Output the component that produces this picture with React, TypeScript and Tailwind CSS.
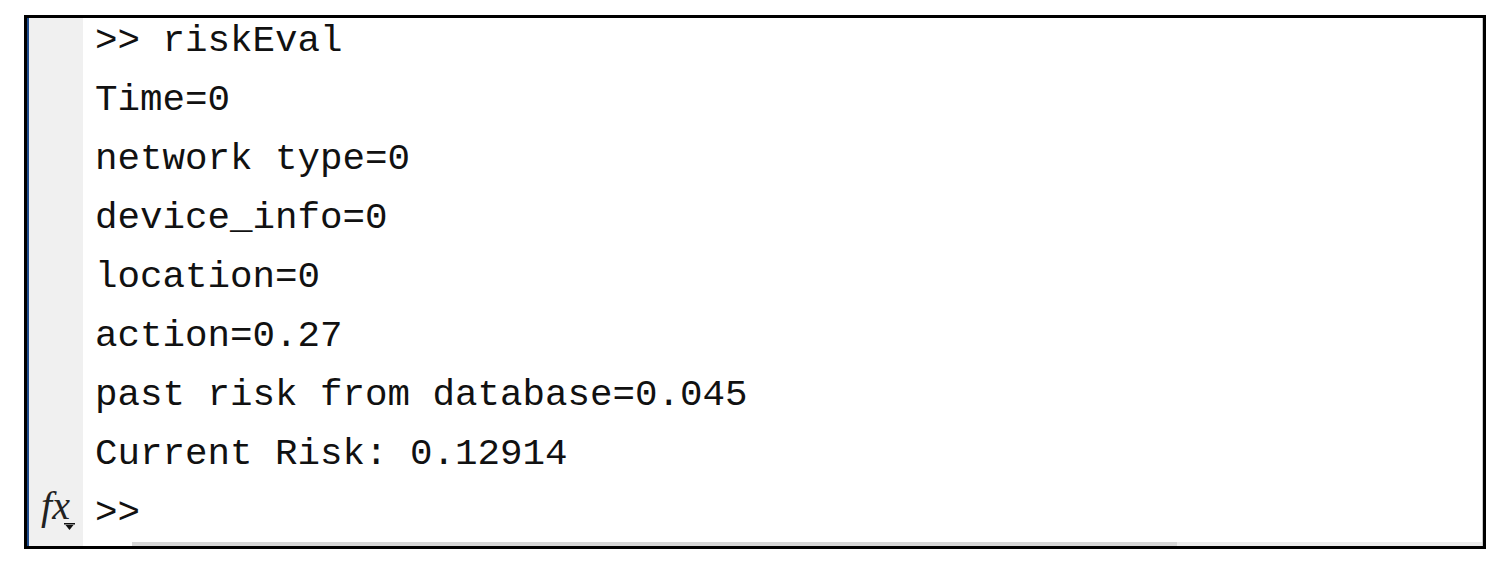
import React from "react";

const lines = [
  ">> riskEval",
  "Time=0",
  "network type=0",
  "device_info=0",
  "location=0",
  "action=0.27",
  "past risk from database=0.045",
  "Current Risk: 0.12914",
  ">>",
];

export default function App() {
  return (
    <div className="w-[1500px] h-[572px] bg-white pt-[15px] pl-[24px]">
      <div className="w-[1462px] h-[534px] border-[3px] border-black flex bg-white">
        {/* left accent + gutter */}
        <div className="w-[2px] bg-[#1d4b8c]" />
        <div className="w-[54px] bg-[#f0f0f0] flex flex-col justify-end items-center pb-[20px]">
          <span
            className="relative block text-[40px] leading-[40px] italic text-[#222] pr-[3px] ml-[2px]"
            style={{ fontFamily: '"Liberation Serif", "DejaVu Serif", serif' }}
          >
            fx
            <svg
              className="absolute right-[-2px] bottom-[-4px]"
              width="11"
              height="7"
              viewBox="0 0 11 7"
            >
              <rect x="0" y="0" width="11" height="1.5" fill="#111" />
              <polygon points="1.5,2 9.5,2 5.5,7" fill="#111" />
            </svg>
          </span>
        </div>

        {/* console */}
        <div className="flex-1 flex flex-col">
          <div className="flex-1 overflow-hidden pl-[12px]">
            <div
              className="-mt-[6.5px] text-[37.5px] leading-[59px] text-[#111] whitespace-pre"
              style={{ fontFamily: '"Liberation Mono", "Courier New", monospace' }}
            >
              {lines.map((l, i) => (
                <div key={i}>{l}</div>
              ))}
            </div>
          </div>
          <div className="h-[4px] flex">
            <div className="w-[49px] bg-white" />
            <div className="w-[1045px] bg-[#d6d6d6]" />
            <div className="flex-1 bg-[#ececec]" />
          </div>
        </div>
        <div className="w-[1px] bg-[#c8c8c8]" />
      </div>
    </div>
  );
}
